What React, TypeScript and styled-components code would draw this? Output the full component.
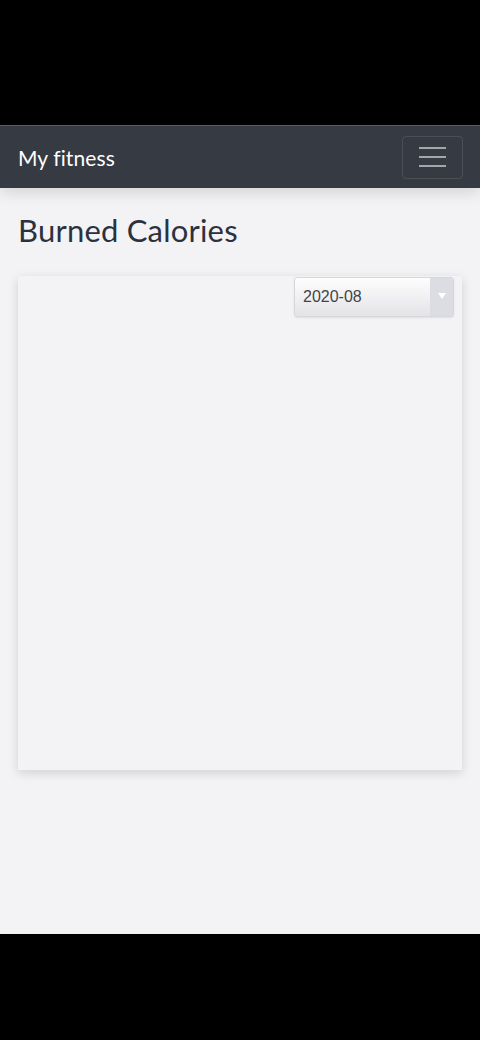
import styled, { createGlobalStyle } from 'styled-components'

const GlobalStyle = createGlobalStyle`
	html, body {
		margin: 0;
		padding: 0;
		background: #000;
	}
	* {
		box-sizing: border-box;
	}
`

export default function App() {
	return (
		<>
			<GlobalStyle />
			<Screen>
				<Viewport>
					<Navbar>
						<Brand>My fitness</Brand>
						<Toggler aria-label='Toggle navigation'>
							<Bar />
							<Bar />
							<Bar />
						</Toggler>
					</Navbar>
					<Main>
						<Title>Burned Calories</Title>
						<Card>
							<CardHeader>
								<Select>
									<SelectValue>2020-08</SelectValue>
									<SelectArrow>
										<svg width='8' height='6' viewBox='0 0 8 6'>
											<path d='M0 0 L8 0 L4 6 Z' fill='#fff' />
										</svg>
									</SelectArrow>
								</Select>
							</CardHeader>
						</Card>
					</Main>
				</Viewport>
			</Screen>
		</>
	)
}

const Screen = styled.div`
	width: 480px;
	height: 1040px;
	background: #000;
	padding-top: 125px;
	padding-bottom: 106px;
	display: flex;
	flex-direction: column;
`

const Viewport = styled.div`
	flex: 1;
	display: flex;
	flex-direction: column;
	background: #f3f3f5;
	border-top: 1px solid #5a5d62;
	overflow: hidden;
`

const Navbar = styled.nav`
	position: relative;
	z-index: 1;
	height: 62px;
	flex-shrink: 0;
	display: flex;
	align-items: center;
	justify-content: space-between;
	padding: 0 18px;
	background: #363a42;
	box-shadow: 0 5px 14px rgba(0, 0, 0, 0.12);
`

const Brand = styled.div`
	font-family: Lato, 'Noto Sans', sans-serif;
	font-size: 21px;
	color: #ffffff;
	letter-spacing: 0.1px;
`

const Toggler = styled.button`
	width: 61px;
	height: 43px;
	display: flex;
	flex-direction: column;
	align-items: center;
	justify-content: center;
	gap: 7px;
	background: transparent;
	border: 1px solid rgba(255, 255, 255, 0.1);
	border-radius: 4px;
	padding: 0;
	margin-right: -1px;
`

const Bar = styled.span`
	display: block;
	width: 27px;
	height: 2px;
	background: #a3a6ab;
`

const Main = styled.main`
	flex: 1;
	padding: 0 18px;
`

const Title = styled.h1`
	margin: 26px 0 0;
	height: 62px;
	font-family: Lato, 'Noto Sans', sans-serif;
	font-weight: 400;
	font-size: 31px;
	line-height: 32px;
	letter-spacing: 0.2px;
	color: #2b323e;
`

const Card = styled.section`
	height: 494px;
	background: #f3f3f5;
	box-shadow: 0 3px 10px rgba(0, 0, 0, 0.14);
	padding: 1px 8px 0 0;
`

const CardHeader = styled.div`
	display: flex;
	justify-content: flex-end;
`

const Select = styled.div`
	width: 160px;
	height: 40px;
	display: flex;
	border: 1px solid #d6d7dc;
	border-radius: 3px;
	overflow: hidden;
	background: linear-gradient(#fdfdfd, #e4e4e7);
	box-shadow: 0 1px 2px rgba(0, 0, 0, 0.08);
`

const SelectValue = styled.div`
	flex: 1;
	display: flex;
	align-items: center;
	padding-left: 8px;
	font-family: 'Liberation Sans', Arial, sans-serif;
	font-size: 16px;
	color: #444448;
`

const SelectArrow = styled.div`
	width: 23px;
	display: flex;
	justify-content: center;
	padding-top: 15px;
	background: #dcdde3;
`
